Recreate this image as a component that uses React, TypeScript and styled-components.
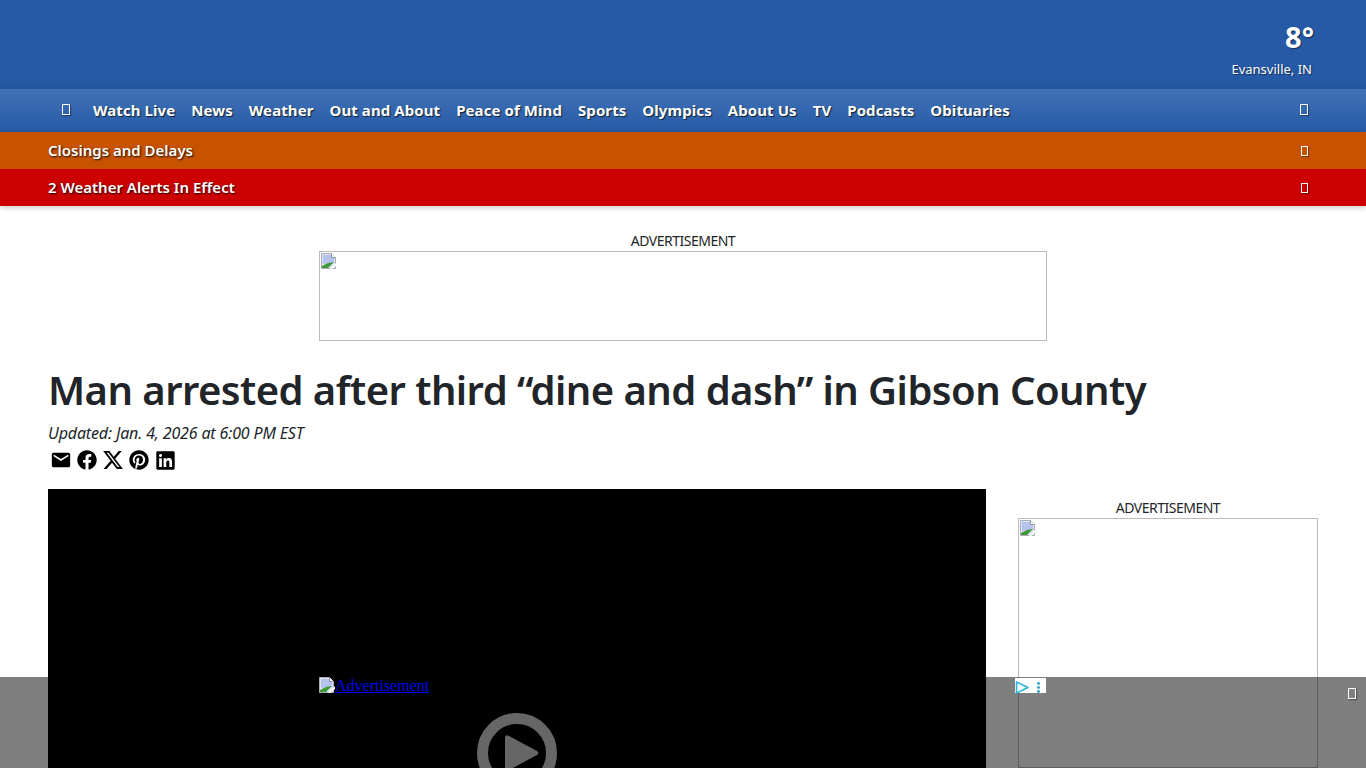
import React from "react";
import styled, { createGlobalStyle } from "styled-components";
import { FaFacebook, FaLinkedin, FaPinterest } from "react-icons/fa";
import { FaXTwitter } from "react-icons/fa6";
import { MdEmail } from "react-icons/md";

const Global = createGlobalStyle`
  html, body {
    margin: 0;
    height: 100%;
    overflow: hidden;
    background: #fff;
    font-family: "Noto Sans", "Open Sans", sans-serif;
    color: #212529;
  }
`;

const Page = styled.div`
  position: relative;
  height: 768px;
  overflow: hidden;
`;

const Masthead = styled.header`
  height: 89px;
  background: linear-gradient(#265aa6 0%, #265aa6 90%, #25579f 100%);
  display: flex;
  justify-content: flex-end;
  padding-right: 54px;
  color: #fff;
`;

const Weather = styled.div`
  display: flex;
  flex-direction: column;
  align-items: flex-end;
  padding-top: 17px;
  text-shadow: 1px 1px 1px rgba(0, 0, 0, 0.5);
`;

const Temp = styled.div`
  font-size: 29px;
  line-height: 39px;
  font-weight: 700;
  margin-right: -2px;
`;

const City = styled.div`
  font-size: 13px;
  line-height: 18px;
  margin-top: 4px;
`;

const Nav = styled.nav`
  height: 43px;
  background: linear-gradient(#4272b6, #265aa6);
  display: flex;
  align-items: center;
  padding: 0 58px 2px 62px;
  box-sizing: border-box;
  color: #fff;
`;

const NavLinks = styled.div`
  display: flex;
  flex: 1;
  gap: 16px;
  margin-left: 23px;
`;

const NavLink = styled.a`
  font-size: 15px;
  line-height: 20px;
  font-weight: 700;
  letter-spacing: 0.08px;
  white-space: nowrap;
  text-shadow: 1px 1px 1px rgba(0, 0, 0, 0.7);
`;

const Tofu = styled.span<{ $w?: number; $h?: number }>`
  display: block;
  box-sizing: border-box;
  width: ${({ $w }) => $w ?? 8}px;
  height: ${({ $h }) => $h ?? 11}px;
  border: 1px solid #fff;
  box-shadow: 1px 1px 1px rgba(0, 0, 0, 0.35);
  flex: none;
`;

const Strip = styled.div<{ $bg: string }>`
  height: 37px;
  box-sizing: border-box;
  background: ${({ $bg }) => $bg};
  display: flex;
  align-items: center;
  justify-content: space-between;
  padding: 0 58px 2px 48px;
  color: #fff;
  font-size: 15px;
  font-weight: 600;
  text-shadow: 1px 1px 2px rgba(0, 0, 0, 0.9);
`;

const StripIcon = styled(Tofu)`
  margin-bottom: -2px;
`;

const Alerts = styled.div`
  box-shadow: 0 2px 5px rgba(0, 0, 0, 0.2);
  position: relative;
`;

const AdBlock = styled.div`
  display: flex;
  flex-direction: column;
  align-items: center;
`;

const AdLabel = styled.div`
  font-size: 14px;
  line-height: 18px;
  margin-bottom: 1px;
  letter-spacing: -0.5px;
`;

const AdBox = styled.div<{ $w: number; $h: number }>`
  box-sizing: border-box;
  width: ${({ $w }) => $w}px;
  height: ${({ $h }) => $h}px;
  border: 1px solid #bbb;
  padding: 1px;
`;

const TopAd = styled(AdBlock)`
  padding-top: 26px;
`;

const Article = styled.main`
  padding: 23px 48px 0;
`;

const Title = styled.h1`
  margin: 0;
  font-size: 40px;
  line-height: 52px;
  font-weight: 600;
  letter-spacing: -0.55px;
  white-space: nowrap;
`;

const Updated = styled.div`
  font-size: 16px;
  line-height: 22px;
  font-style: italic;
  margin-top: 6px;
  letter-spacing: -0.15px;
`;

const Share = styled.div`
  display: flex;
  gap: 4px;
  align-items: center;
  margin-top: 3px;
  height: 26px;
  padding-left: 2px;
  color: #000;
`;

const ShareIcon = styled.span`
  width: 22px;
  height: 24px;
  display: flex;
  align-items: center;
  justify-content: center;
`;

const Columns = styled.div`
  display: grid;
  grid-template-columns: 938px 300px;
  justify-content: space-between;
  margin-top: 16px;
`;

const Video = styled.div`
  height: 527px;
  background: #000;
  display: flex;
  align-items: center;
  justify-content: center;
  color: #ccc;
`;

const Sidebar = styled(AdBlock)`
  padding-top: 10px;
`;

const Overlay = styled.div`
  position: absolute;
  left: 0;
  right: 0;
  bottom: 0;
  height: 91px;
  background: rgba(0, 0, 0, 0.5);
`;

const OverlayAd = styled.a`
  position: absolute;
  left: 319px;
  top: 0;
  display: flex;
  align-items: flex-start;
  font-family: "Liberation Serif", serif;
  font-size: 16px;
  line-height: 18px;
  color: #0000ee;
  text-decoration: underline;
`;

const AdChoices = styled.div`
  position: absolute;
  left: 1015px;
  top: 1px;
  width: 31px;
  height: 15px;
  background: #fff;
  display: flex;
`;

const AdChoiceCell = styled.span`
  width: 15px;
  height: 15px;
  display: block;
  & + & {
    margin-left: 1px;
  }
`;

const OverlayClose = styled.div`
  position: absolute;
  left: 1348px;
  top: 11px;
`;

const BrokenSvg = styled.svg`
  flex: none;
  display: block;
`;

const BrokenImage = () => (
  <BrokenSvg width="16" height="16" viewBox="0 0 16 16">
    <path d="M.5.5h10l4 4v11H.5z" fill="#dfe5f7" stroke="#a9acb4" strokeWidth="1" />
    <path d="M2 2h8v3h3v5L2 11z" fill="#b4c3ee" />
    <path d="M1 15v-2l6-3 6-1-6 6z" fill="#3f9a35" />
    <path d="M10.5.5v4h4" fill="#fff" stroke="#8f9299" />
    <path d="M16 9 9 16h2l5-4z" fill="#fff" />
  </BrokenSvg>
);

const navItems = ["Watch Live", "News", "Weather", "Out and About", "Peace of Mind", "Sports", "Olympics", "About Us", "TV", "Podcasts", "Obituaries"];

export default function App() {
  return (
    <Page>
      <Global />
      <Masthead>
        <Weather>
          <Temp>8°</Temp>
          <City>Evansville, IN</City>
        </Weather>
      </Masthead>
      <Nav>
        <Tofu />
        <NavLinks>
          {navItems.map((item) => (
            <NavLink key={item}>{item}</NavLink>
          ))}
        </NavLinks>
        <Tofu />
      </Nav>
      <Alerts>
        <Strip $bg="#c75300">
          Closings and Delays
          <StripIcon $w={7} $h={10} />
        </Strip>
        <Strip $bg="#cc0000">
          2 Weather Alerts In Effect
          <StripIcon $w={7} $h={10} />
        </Strip>
      </Alerts>
      <TopAd>
        <AdLabel>ADVERTISEMENT</AdLabel>
        <AdBox $w={728} $h={90}>
          <BrokenImage />
        </AdBox>
      </TopAd>
      <Article>
        <Title>Man arrested after third “dine and dash” in Gibson County</Title>
        <Updated>Updated: Jan. 4, 2026 at 6:00 PM EST</Updated>
        <Share>
          <ShareIcon><MdEmail size={24} /></ShareIcon>
          <ShareIcon><FaFacebook size={20} /></ShareIcon>
          <ShareIcon><FaXTwitter size={24} /></ShareIcon>
          <ShareIcon><FaPinterest size={20} /></ShareIcon>
          <ShareIcon><FaLinkedin size={21} /></ShareIcon>
        </Share>
        <Columns>
          <Video>
            <svg width="80" height="80" viewBox="0 0 80 80">
              <circle cx="40" cy="40" r="34.5" fill="none" stroke="currentColor" strokeWidth="11" />
              <path d="M28 25q0-4 4-2l28 15q3 2 0 4L32 57q-4 2-4-2z" fill="currentColor" />
            </svg>
          </Video>
          <Sidebar>
            <AdLabel>ADVERTISEMENT</AdLabel>
            <AdBox $w={300} $h={250}>
              <BrokenImage />
            </AdBox>
          </Sidebar>
        </Columns>
      </Article>
      <Overlay>
        <OverlayAd>
          <BrokenImage />
          Advertisement
        </OverlayAd>
        <AdChoices>
          <AdChoiceCell>
            <svg width="15" height="15" viewBox="0 0 15 15">
              <path d="M1.5 1.8 13 7.5 1.5 13.2z" fill="#e8f8fc" stroke="#2bb3d6" strokeWidth="1.5" strokeLinejoin="round" />
            </svg>
          </AdChoiceCell>
          <AdChoiceCell>
            <svg width="15" height="15" viewBox="0 0 15 15">
              <circle cx="7.5" cy="3.5" r="1.4" fill="#2b9fc0" />
              <circle cx="7.5" cy="7.5" r="1.4" fill="#2b9fc0" />
              <circle cx="7.5" cy="11.5" r="1.4" fill="#2b9fc0" />
            </svg>
          </AdChoiceCell>
        </AdChoices>
        <OverlayClose>
          <Tofu $w={8} $h={11} />
        </OverlayClose>
      </Overlay>
    </Page>
  );
}
